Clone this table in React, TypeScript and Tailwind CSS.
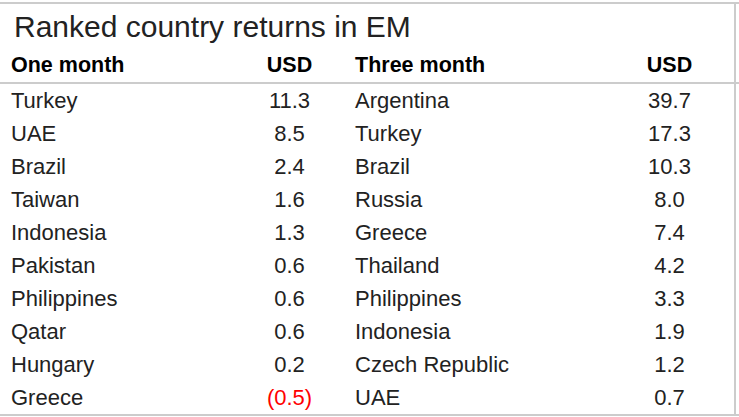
import React from 'react';

const oneMonth: [string, string][] = [
  ['Turkey', '11.3'],
  ['UAE', '8.5'],
  ['Brazil', '2.4'],
  ['Taiwan', '1.6'],
  ['Indonesia', '1.3'],
  ['Pakistan', '0.6'],
  ['Philippines', '0.6'],
  ['Qatar', '0.6'],
  ['Hungary', '0.2'],
  ['Greece', '(0.5)'],
];

const threeMonth: [string, string][] = [
  ['Argentina', '39.7'],
  ['Turkey', '17.3'],
  ['Brazil', '10.3'],
  ['Russia', '8.0'],
  ['Greece', '7.4'],
  ['Thailand', '4.2'],
  ['Philippines', '3.3'],
  ['Indonesia', '1.9'],
  ['Czech Republic', '1.2'],
  ['UAE', '0.7'],
];

const cols = 'grid grid-cols-[238px_81px_299px_81px] pl-[11px]';

function Row({ className, children }: { className?: string; children: React.ReactNode }) {
  return (
    <div className={`flex ${className ?? ''}`}>
      <div className="w-[734px]">{children}</div>
      <div className="w-[2px] bg-[#cccccc]" />
    </div>
  );
}

export default function App() {
  return (
    <div
      className="w-[739px] h-[417px] bg-white pt-[2px] text-[#222222]"
      style={{ fontFamily: '"Liberation Sans", Arial, sans-serif' }}
    >
      <div className="border-t-2 border-b-2 border-[#cccccc]">
        <Row>
          <div className="h-[45px] pl-[14px] text-[30px] leading-[45px]">Ranked country returns in EM</div>
        </Row>
        <Row className="border-b-2 border-[#cccccc]">
          <div className={`${cols} h-[33px] text-[21.5px] leading-[33px] font-bold text-black`}>
            <span>One month</span>
            <span className="text-center">USD</span>
            <span className="pl-[25px]">Three month</span>
            <span className="text-center">USD</span>
          </div>
        </Row>
        {oneMonth.map((r, i) => (
          <Row key={i}>
            <div className={`${cols} h-[33px] text-[22px] leading-[33px]`}>
              <span>{r[0]}</span>
              <span className={`text-center ${r[1].startsWith('(') ? 'text-[#ff0000]' : ''}`}>{r[1]}</span>
              <span className="pl-[25px]">{threeMonth[i][0]}</span>
              <span className="text-center">{threeMonth[i][1]}</span>
            </div>
          </Row>
        ))}
      </div>
    </div>
  );
}
